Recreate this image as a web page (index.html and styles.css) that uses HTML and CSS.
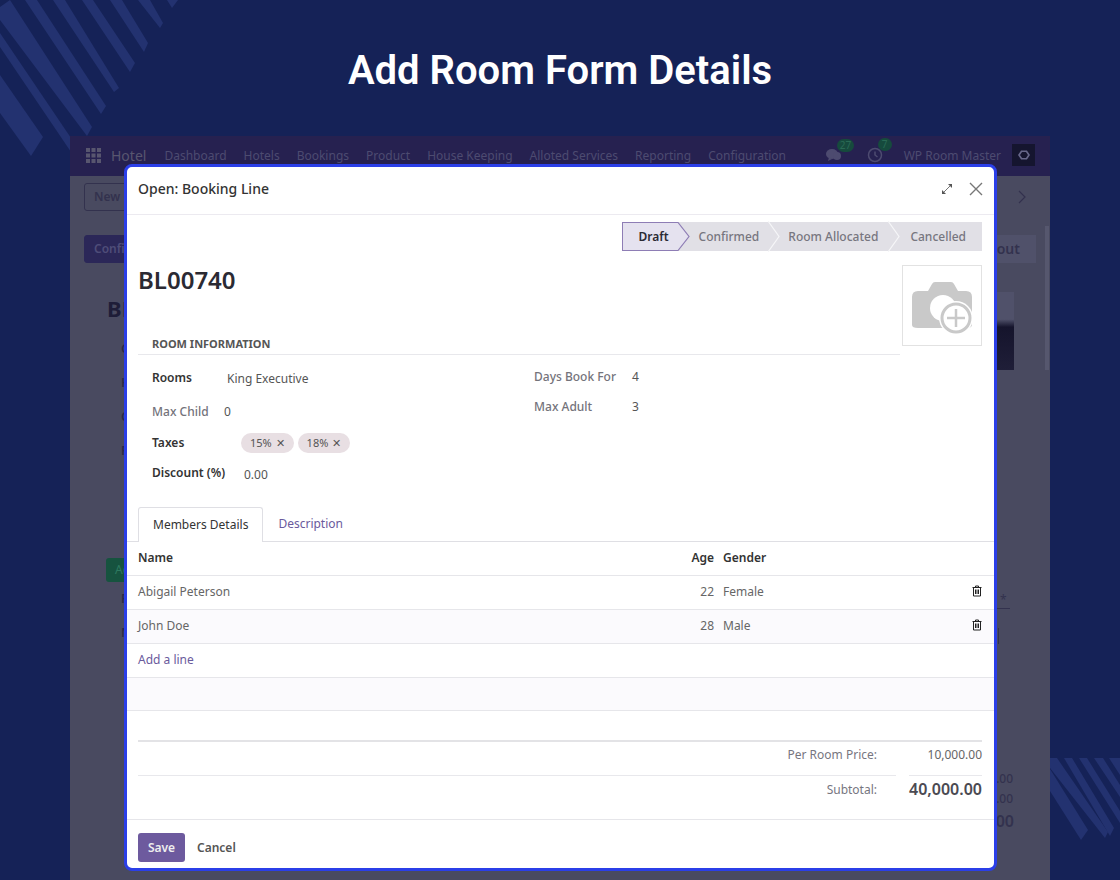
FILE: index.html
```html
<!DOCTYPE html>
<html lang="en">
<head>
    <meta charset="UTF-8">
    <title>Add Room Form Details</title>
    <link rel="stylesheet" href="styles.css">
</head>
<body>
    <svg class="stripes" viewBox="0 0 1120 880" width="1120" height="880">
        <polygon points="167,0 178,0 172,8"/>
        <polygon points="138,0 150,0 163,23 160,28"/>
        <polygon points="110,0 122,0 148,43 144,52"/>
        <polygon points="82,0 93,0 135,63 130,72"/>
        <polygon points="53,0 65,0 119,88 114,92"/>
        <polygon points="25,0 37,0 106,106 101,114"/>
        <polygon points="0,7 10,0 92,127 87,136 0,20"/>
        <polygon points="0,33 71,138 71,152 0,47"/>
        <polygon points="0,75 43,137 31,156 0,113"/>
        <polygon points="1109,758 1120,758 1120,775"/>
        <polygon points="1094,758 1103,758 1120,785 1120,797"/>
        <polygon points="1079,758 1087,758 1120,811 1120,823"/>
        <polygon points="1064,758 1072,758 1114,828 1110,836"/>
        <polygon points="1050,758 1057,758 1108,832 1105,838 1050,768"/>
        <polygon points="1050,769 1088,830 1081,840 1050,791"/>
    </svg>

    <header class="hero">
        <h1>Add Room Form Details</h1>
    </header>

    <div class="app">
        <div class="topbar">
            <svg class="apps" width="15" height="15" viewBox="0 0 15 15">
                <rect x="0" y="0" width="4" height="4"/><rect x="5.5" y="0" width="4" height="4"/><rect x="11" y="0" width="4" height="4"/>
                <rect x="0" y="5.5" width="4" height="4"/><rect x="5.5" y="5.5" width="4" height="4"/><rect x="11" y="5.5" width="4" height="4"/>
                <rect x="0" y="11" width="4" height="4"/><rect x="5.5" y="11" width="4" height="4"/><rect x="11" y="11" width="4" height="4"/>
            </svg>
            <span class="brand">Hotel</span>
            <nav class="nav">
                <span>Dashboard</span>
                <span>Hotels</span>
                <span>Bookings</span>
                <span>Product</span>
                <span>House Keeping</span>
                <span>Alloted Services</span>
                <span>Reporting</span>
                <span>Configuration</span>
            </nav>
            <div class="systray">
                <span class="tray-item">
                    <svg width="16" height="14" viewBox="0 0 16 14"><ellipse cx="6" cy="6" rx="6" ry="5"/><ellipse cx="11" cy="8" rx="4" ry="4"/><path d="M3 9l-1 4 4-2z"/></svg>
                    <b class="count">27</b>
                </span>
                <span class="tray-item tray-clock">
                    <svg width="16" height="16" viewBox="0 0 16 16"><circle cx="8" cy="8" r="6.500"/><path d="M8 4.500v3.500l2.500 2"/></svg>
                    <b class="count">7</b>
                </span>
                <span class="user">WP Room Master</span>
                <span class="avatar">
                    <svg width="12" height="10" viewBox="0 0 14 12"><path d="M4 1.5h6l3 4.500-3 4.500h-6l-3-4.500z"/></svg>
                </span>
            </div>
        </div>

        <div class="app-body">
            <div class="back-left">
                <span class="back-btn">New</span>
                <span class="back-btn back-primary">Confirm</span>
                <span class="back-title">BL00740</span>
                <span class="back-field back-first">Guest</span>
                <span class="back-field">Hotel</span>
                <span class="back-field">Check</span>
                <span class="back-field">Room</span>
                <span class="back-badge">Add</span>
                <span class="back-field back-after">R</span>
                <span class="back-field">N</span>
            </div>
            <div class="back-right">
                <span class="back-next">
                    <svg width="10" height="14" viewBox="0 0 10 14"><path d="M2 1l6 6-6 6"/></svg>
                </span>
                <span class="back-out">Check out</span>
                <span class="back-photo"></span>
                <span class="back-star">*</span>
                <span class="back-bar"></span>
                <span class="back-num">0.00</span>
                <span class="back-num">0.00</span>
                <span class="back-num back-big">0.00</span>
            </div>
            <span class="back-scroll"></span>
        </div>
    </div>

    <!-- dialog -->
    <div class="modal">
        <div class="modal-header">
            <h3>Open: Booking Line</h3>
            <svg class="expand-icon" width="12" height="12" viewBox="0 0 12 12">
                <path class="thin" d="M3 9l6-6"/>
                <path d="M7 1h4v4zM1 7v4h4z"/>
            </svg>
            <svg class="close-icon" width="14" height="14" viewBox="0 0 14 14"><path d="M1 1l12 12M13 1L1 13"/></svg>
        </div>

        <div class="statusbar">
            <div class="step step-active">Draft
                <svg class="step-tip" width="13" height="29" viewBox="0 0 13 29"><path d="M0 .5h1L12 14.500 1 28.500H0"/></svg>
            </div>
            <div class="step">Confirmed
                <svg class="step-tip" width="13" height="31" viewBox="0 0 13 31"><path d="M0 0l11 15.500L0 31"/></svg>
            </div>
            <div class="step">Room Allocated
                <svg class="step-tip" width="13" height="31" viewBox="0 0 13 31"><path d="M0 0l11 15.500L0 31"/></svg>
            </div>
            <div class="step">Cancelled</div>
        </div>

        <div class="sheet-top">
            <h2 class="ref">BL00740</h2>
            <div class="photo">
                <svg width="64" height="60" viewBox="0 0 64 60">
                    <g transform="translate(0 4)">
                        <path class="cam" d="M8 11h10l4-7q1-2 3-2h16q2 0 3 2l4 7h8q6 0 6 6v28q0 3-6 3H8q-6 0-6-3V17q0-6 6-6z"/>
                        <circle class="cam-lens" cx="33" cy="28" r="13"/>
                        <circle class="cam-gap" cx="46" cy="38" r="17"/>
                        <circle class="cam-ring" cx="46" cy="38" r="14"/>
                        <path class="cam-plus" d="M46 29v18M37 38h18"/>
                    </g>
                </svg>
            </div>
        </div>

        <div class="section-head">
            <h4>Room Information</h4>
        </div>

        <div class="info">
            <div class="info-col">
                <div class="field field-rooms"><label class="strong">Rooms</label><span>King Executive</span></div>
                <div class="field field-child"><label>Max Child</label><span>0</span></div>
                <div class="field field-taxes">
                    <label class="strong">Taxes</label>
                    <span class="tag">15% <i>✕</i></span>
                    <span class="tag">18% <i>✕</i></span>
                </div>
                <div class="field field-discount"><label class="strong">Discount (%)</label><span>0.00</span></div>
            </div>
            <div class="info-col info-right">
                <div class="field field-days"><label>Days Book For</label><span>4</span></div>
                <div class="field field-adult"><label>Max Adult</label><span>3</span></div>
            </div>
        </div>

        <div class="tabs">
            <span class="tab tab-active">Members Details</span>
            <span class="tab">Description</span>
        </div>

        <table class="lines">
            <thead>
                <tr><th class="col-name">Name</th><th class="col-age">Age</th><th class="col-gender">Gender</th><th class="col-del"></th></tr>
            </thead>
            <tbody>
                <tr>
                    <td class="col-name">Abigail Peterson</td><td class="col-age">22</td><td class="col-gender">Female</td>
                    <td class="col-del"><svg class="trash" width="10" height="12" viewBox="0 0 10 12"><path d="M.5 2.500h9M3.500 2.500v-1.500h3v1.500M1.500 2.500v8.500h7v-8.500M3.500 4.500v4.500M5 4.500v4.500M6.500 4.500v4.500"/></svg></td>
                </tr>
                <tr class="row-tint">
                    <td class="col-name">John Doe</td><td class="col-age">28</td><td class="col-gender">Male</td>
                    <td class="col-del"><svg class="trash" width="10" height="12" viewBox="0 0 10 12"><path d="M.5 2.500h9M3.500 2.500v-1.500h3v1.500M1.500 2.500v8.500h7v-8.500M3.500 4.500v4.500M5 4.500v4.500M6.500 4.500v4.500"/></svg></td>
                </tr>
                <tr><td class="col-name add-line" colspan="4">Add a line</td></tr>
                <tr class="row-tint row-empty"><td colspan="4">&nbsp;</td></tr>
            </tbody>
        </table>

        <div class="totals">
            <div class="total-row">
                <span class="total-label">Per Room Price:</span>
                <span class="total-value">10,000.00</span>
            </div>
            <div class="total-row total-sub">
                <span class="total-label">Subtotal:</span>
                <span class="total-value">40,000.00</span>
            </div>
        </div>

        <div class="modal-footer">
            <button class="btn-save">Save</button>
            <button class="btn-cancel">Cancel</button>
        </div>
    </div>
</body>
</html>
```

FILE: styles.css
```css
html, body {
    margin: 0;
    height: 880px;
    overflow: hidden;
}
body {
    position: relative;
    background: #152257;
    font-family: "Noto Sans", Arial, sans-serif;
    font-size: 12px;
    color: #555;
}
.stripes {
    position: absolute;
    top: 0;
    left: 0;
}
.stripes polygon { fill: #233270; }

.hero {
    position: relative;
    height: 136px;
    box-sizing: border-box;
    padding-top: 45px;
    text-align: center;
}
.hero h1 {
    margin: 0;
    font-family: Roboto, Arial, sans-serif;
    font-size: 40px;
    line-height: 52px;
    font-weight: 600;
    color: #fff;
}

/* dimmed app behind the dialog */
.app {
    position: relative;
    margin: 0 70px;
    height: 744px;
    background: #494a60;
    color: #33324e;
}
.topbar {
    height: 40px;
    background: #262150;
    display: flex;
    align-items: center;
    padding: 0 15px 2px 16px;
    box-sizing: border-box;
    color: #4d4b70;
}
.apps { fill: #58566f; }
.brand {
    margin-left: 10px;
    font-size: 14px;
    color: #58566f;
}
.nav {
    display: flex;
    gap: 17px;
    margin-left: 18px;
}
.systray {
    margin-left: auto;
    display: flex;
    align-items: center;
}
.tray-item {
    position: relative;
    width: 41px;
    display: flex;
    align-items: center;
}
.tray-item svg { fill: #4d4b70; }
.tray-clock svg {
    fill: none;
    stroke: #4d4b70;
    stroke-width: 1.500;
}
.count {
    position: absolute;
    top: -9px;
    left: 11px;
    min-width: 8px;
    padding: 0 3px;
    border-radius: 8px;
    background: #164a3d;
    color: #2a6a55;
    font-size: 10px;
    font-weight: 400;
    line-height: 13px;
    text-align: center;
}
.user { margin-left: -4px; }
.avatar {
    width: 23px;
    height: 22px;
    margin-left: 11px;
    background: #15152f;
    display: flex;
    align-items: center;
    justify-content: center;
}
.avatar svg {
    fill: none;
    stroke: #67678a;
    stroke-width: 2;
}
.app-body {
    display: flex;
    justify-content: space-between;
    padding-left: 14px;
}
.back-left {
    width: 80px;
    display: flex;
    flex-direction: column;
    align-items: flex-start;
    white-space: nowrap;
}
.back-btn {
    width: 40px;
    height: 26px;
    margin-top: 7px;
    padding-left: 9px;
    border: 1px solid #33324e;
    border-radius: 3px;
    font-size: 12px;
    font-weight: 600;
    line-height: 26px;
    color: #33324e;
}
.back-primary {
    margin-top: 24px;
    background: #2b2758;
    border-color: #2b2758;
    color: #4f4d78;
}
.back-title {
    margin: 30px 0 0 23px;
    font-size: 22px;
    font-weight: 700;
    line-height: 30px;
    color: #1e1d38;
}
.back-field {
    margin: 17px 0 0 37px;
    line-height: 17px;
    font-weight: 600;
    color: #2b2a44;
}
.back-first { margin-top: 17px; }
.back-badge {
    width: 42px;
    height: 24px;
    margin: 99px 0 0 22px;
    padding-left: 9px;
    background: #16533f;
    border-radius: 3px;
    line-height: 24px;
    color: #2e7a60;
}
.back-after { margin-top: 8px; }
.back-right {
    width: 53px;
    display: flex;
    flex-direction: column;
    align-items: flex-start;
    white-space: nowrap;
}
.back-next {
    margin: 14px 0 0 20px;
    height: 14px;
}
.back-next svg {
    fill: none;
    stroke: #33324e;
    stroke-width: 1.200;
}
.back-out {
    width: 39px;
    height: 28px;
    margin-top: 31px;
    background: #50516a;
    line-height: 28px;
    display: flex;
    justify-content: flex-end;
    box-sizing: border-box;
    padding-right: 16px;
    font-size: 14px;
    font-weight: 600;
}
.back-photo {
    width: 17px;
    height: 78px;
    margin-top: 29px;
    background: linear-gradient(#50516a 35%, #15142c 45%, #1f1e38 100%);
}
.back-star {
    margin: 222px 0 0 0;
    padding: 0 3px;
    line-height: 16px;
    border-bottom: 1px solid #33324e;
}
.back-bar {
    width: 1px;
    height: 16px;
    margin: 19px 0 0 1px;
    background: #33324e;
}
.back-num {
    margin: 127px 0 0 0;
    width: 16px;
    line-height: 16px;
    display: flex;
    justify-content: flex-end;
    font-weight: 500;
}
.back-num + .back-num { margin-top: 4px; }
.back-num + .back-big {
    width: 17px;
    font-size: 16px;
    font-weight: 600;
    line-height: 20px;
    margin-top: 4px;
}
.back-scroll {
    position: absolute;
    top: 90px;
    right: 1px;
    width: 4px;
    height: 144px;
    background: #56576e;
}

/* dialog */
.modal {
    position: absolute;
    top: 164px;
    left: 124px;
    width: 873px;
    height: 707px;
    box-sizing: border-box;
    border: 3px solid #2b3fe8;
    border-radius: 8px;
    background: #fff;
}
.modal-header {
    height: 48px;
    box-sizing: border-box;
    border-bottom: 1px solid #eceaf0;
    display: flex;
    align-items: center;
    padding: 0 11px 4px;
}
.modal-header h3 {
    margin: 0 auto 0 0;
    font-size: 14px;
    font-weight: 500;
    color: #333;
}
.expand-icon { fill: #555; margin-right: 16px; }
.expand-icon .thin { stroke: #777; stroke-width: 1; fill: none; }
.close-icon {
    fill: none;
    stroke: #777;
    stroke-width: 1.400;
}

.statusbar {
    display: flex;
    justify-content: flex-end;
    height: 29px;
    margin: 7px 12px 0 0;
}
.step {
    position: relative;
    display: flex;
    align-items: center;
    background: #e1e0e6;
    font-weight: 500;
    color: #77767f;
}
.step:nth-child(2) { padding: 0 10px 0 21px; }
.step:nth-child(3) { padding: 0 11px 0 19px; }
.step:last-child { padding: 0 16px 0 21px; }
.step-tip {
    position: absolute;
    top: -1px;
    left: 100%;
    margin-left: -1px;
    z-index: 1;
    fill: none;
    stroke: #f6f6f8;
    stroke-width: 1.200;
}
.step-active {
    box-sizing: border-box;
    background: #e5e2ef;
    border: 1px solid #8e7db5;
    border-right: 0;
    padding: 0 9px 0 15px;
    font-weight: 600;
    color: #2b2a33;
}
.step-active .step-tip {
    top: -1px;
    fill: #e5e2ef;
    stroke: #8e7db5;
}

.sheet-top {
    display: flex;
    justify-content: space-between;
    margin: 14px 12px 0 11px;
    height: 81px;
}
.ref {
    margin: 0;
    font-size: 24px;
    font-weight: 600;
    line-height: 30px;
    color: #2b2a33;
}
.photo {
    width: 80px;
    height: 81px;
    box-sizing: border-box;
    border: 1px solid #e2e2e2;
    display: flex;
    align-items: center;
    justify-content: center;
}
.cam { fill: #c9c9c9; }
.cam-lens { fill: #fff; }
.cam-gap { fill: #fff; }
.cam-ring {
    fill: #fff;
    stroke: #c9c9c9;
    stroke-width: 3;
}
.cam-plus {
    fill: none;
    stroke: #c9c9c9;
    stroke-width: 2.500;
}

.section-head {
    margin: -10px 94px 0 11px;
    padding: 0 0 2px 14px;
    border-bottom: 1px solid #e8e8ec;
}
.section-head h4 {
    margin: 0;
    font-size: 11px;
    font-weight: 700;
    line-height: 16px;
    text-transform: uppercase;
    color: #555;
}

.info {
    display: flex;
    padding-left: 25px;
    height: 152px;
}
.info-col { width: 382px; }
.field {
    display: flex;
    align-items: center;
    height: 20px;
}
.field label { color: #74737b; font-weight: 500; }
.field label.strong { color: #333; font-weight: 600; }
.field-rooms { margin-top: 12px; }
.field-rooms label { width: 75px; }
.field-rooms span { padding-top: 2px; }
.field-child { margin-top: 14px; }
.field-child label { width: 72px; }
.field-taxes { margin-top: 11px; }
.field-taxes label { width: 89px; }
.field-discount { margin-top: 10px; }
.field-discount label { width: 92px; }
.field-discount span { padding-top: 5px; }
.field-days { margin-top: 11px; }
.field-days label { width: 98px; }
.field-adult { margin-top: 10px; }
.field-adult label { width: 98px; }
.field-taxes .tag {
    height: 20px;
    padding: 0 9px;
    margin: 2px 4px 0 0;
    border-radius: 10px;
    background: #e8dfe3;
    font-size: 11px;
    line-height: 20px;
    color: #555;
}
.tag i {
    margin-left: 1px;
    font-style: normal;
    font-size: 11px;
}

.tabs {
    display: flex;
    height: 35px;
    box-sizing: border-box;
    padding-left: 11px;
    border-bottom: 1px solid #dfdfe4;
}
.tab {
    height: 34px;
    padding: 0 15px;
    line-height: 33px;
    color: #6a5a9c;
}
.tab-active {
    height: 35px;
    box-sizing: border-box;
    background: #fff;
    border: 1px solid #dfdfe4;
    border-bottom: 0;
    border-radius: 3px 3px 0 0;
    padding: 0 14px;
    color: #333;
}

.lines {
    width: 100%;
    border-collapse: collapse;
    table-layout: fixed;
}
.lines th, .lines td {
    box-sizing: border-box;
    height: 34px;
    padding: 0 0 2px;
    border-bottom: 1px solid #e6e6ea;
    text-align: left;
}
.lines th { height: 33px; font-weight: 600; color: #333; }
.lines td { color: #666; }
.lines .col-name { padding-left: 11px; }
.lines .col-age { width: 40px; text-align: right; }
.lines .col-gender { width: 258px; padding-left: 9px; }
.lines .col-del { width: 22px; }
.row-tint td { background: #fbfafd; }
.lines .row-empty td { height: 33px; }
.lines td.add-line { color: #6a5a9c; }
.trash {
    display: block;
    fill: none;
    stroke: #222;
    stroke-width: 1;
}

.totals {
    margin: 29px 12px 0 11px;
    border-top: 2px solid #e3e3e6;
}
.total-row {
    display: flex;
    height: 34px;
    color: #77767f;
}
.total-label {
    flex: 1;
    box-sizing: border-box;
    padding-right: 19px;
    border-bottom: 1px solid #e8e8ec;
    line-height: 26px;
    text-align: right;
    color: #77767f;
}
.total-value {
    width: 73px;
    margin-left: 13px;
    box-sizing: border-box;
    border-bottom: 1px solid #e8e8ec;
    line-height: 26px;
    text-align: right;
    white-space: nowrap;
    color: #666;
}
.total-sub .total-label,
.total-sub .total-value { border-bottom: 0; }
.total-sub .total-label { line-height: 27px; }
.total-sub .total-value {
    font-size: 16px;
    font-weight: 600;
    line-height: 26px;
    color: #4b4a52;
}

.modal-footer {
    position: absolute;
    left: 0;
    right: 0;
    bottom: 0;
    height: 49px;
    box-sizing: border-box;
    border-top: 1px solid #e6e6ea;
    display: flex;
    align-items: flex-start;
    padding: 13px 0 0 11px;
}
.btn-save {
    width: 47px;
    height: 29px;
    border: 0;
    border-radius: 3px;
    background: #6d5a9e;
    color: #eee;
    font: 600 12px "Noto Sans", Arial, sans-serif;
}
.btn-cancel {
    margin-left: 12px;
    height: 29px;
    padding: 0;
    border: 0;
    background: none;
    color: #555;
    font: 600 12px "Noto Sans", Arial, sans-serif;
}
```
